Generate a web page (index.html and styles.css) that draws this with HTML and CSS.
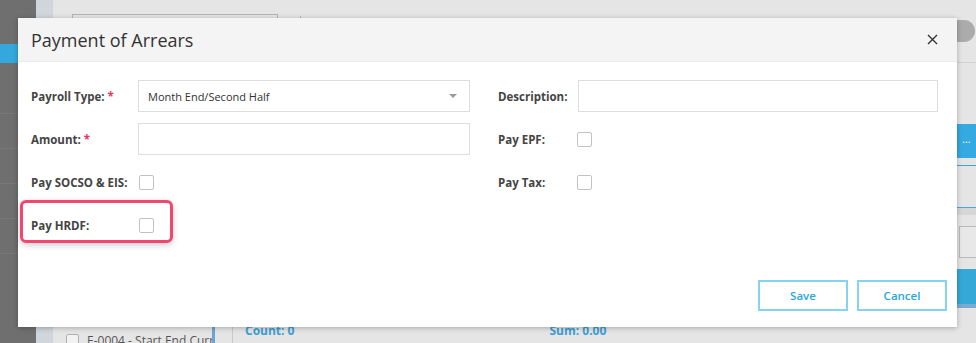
FILE: index.html
```html
<!DOCTYPE html>
<html>
<head>
<meta charset="utf-8">
<link rel="stylesheet" href="styles.css">
</head>
<body>
<div class="app">
  <div class="sidebar">
    <div class="side-item active"></div>
    <div class="side-item"></div>
    <div class="side-item chev"></div>
    <div class="side-item chev"></div>
    <div class="side-item"></div>
    <div class="side-item"></div>
  </div>
  <div class="rail"></div>
  <div class="main">
    <div class="content">
      <div class="topbar">
        <div class="top-input"></div>
        <div class="top-tick"></div>
      </div>
      <div class="bottom">
        <div class="list-panel">
          <div class="list-row"><span class="bg-check"></span><span>E-0004 - Start End Current</span></div>
          <div class="scroll-bar"></div>
        </div>
        <div class="totals">
          <span class="total count">Count: 0</span>
          <span class="total sum">Sum: 0.00</span>
        </div>
      </div>
    </div>
    <div class="right-col">
      <div class="pill"></div>
      <div class="r-line"></div>
      <div class="r-blue"><span>...</span></div>
      <div class="r-blue-line"></div>
      <div class="r-band"></div>
      <div class="r-input"></div>
      <div class="r-blue2"></div>
    </div>
  </div>
</div>

<div class="modal">
  <div class="modal-header">
    <h1 class="modal-title">Payment of Arrears</h1>
    <button class="close" aria-label="Close">
      <svg width="11" height="11" viewBox="0 0 11 11"><path d="M1 1L10 10M10 1L1 10" stroke="#333" stroke-width="1.4" fill="none"/></svg>
    </button>
  </div>
  <div class="modal-body">
    <div class="form">
      <div class="col left">
        <div class="row">
          <label class="label">Payroll Type: <span class="req">*</span></label>
          <div class="field select"><span>Month End/Second Half</span><i class="caret"></i></div>
        </div>
        <div class="row">
          <label class="label">Amount: <span class="req">*</span></label>
          <div class="field"></div>
        </div>
        <div class="row">
          <label class="label">Pay SOCSO &amp; EIS:</label>
          <span class="check"></span>
        </div>
        <div class="row">
          <label class="label">Pay HRDF:</label>
          <span class="check"></span>
        </div>
      </div>
      <div class="col right">
        <div class="row">
          <label class="label">Description:</label>
          <div class="field"></div>
        </div>
        <div class="row">
          <label class="label">Pay EPF:</label>
          <span class="check"></span>
        </div>
        <div class="row">
          <label class="label">Pay Tax:</label>
          <span class="check"></span>
        </div>
      </div>
    </div>
    <div class="actions">
      <button class="btn">Save</button>
      <button class="btn">Cancel</button>
    </div>
  </div>
  <div class="highlight"></div>
</div>
</body>
</html>
```

FILE: styles.css
```css
* { box-sizing: border-box; }
html, body { margin: 0; padding: 0; }
body {
  width: 976px;
  height: 343px;
  overflow: hidden;
  font-family: "Open Sans", "Liberation Sans", sans-serif;
  background: #e5e5e5;
  position: relative;
}

/* ---------- dimmed background app ---------- */
.app {
  display: flex;
  width: 976px;
  height: 343px;
}
.sidebar {
  width: 36px;
  background: #6f6f6f;
  padding-top: 44px;
  display: flex;
  flex-direction: column;
}
.side-item {
  height: 35px;
  border-bottom: 1px solid #777;
}
.side-item.active {
  height: 19px;
  background: #34a8dc;
  border-bottom: none;
  margin-bottom: 16px;
}
.rail {
  width: 17px;
  background: #d0d6dc;
}
.main {
  flex: 1;
  display: flex;
  background: #e5e5e5;
}
.content {
  flex: 1;
  display: flex;
  flex-direction: column;
  justify-content: space-between;
}
.topbar {
  display: flex;
  align-items: flex-start;
  padding-top: 14px;
  padding-left: 19px;
  height: 20px;
}
.top-input {
  width: 206px;
  height: 10px;
  border: 1px solid #b4b4b4;
}
.top-tick {
  width: 1px;
  height: 4px;
  background: #b4b4b4;
  margin-left: 22px;
  margin-top: 2px;
}
.bottom {
  display: flex;
  height: 53px;
}
.list-panel {
  width: 180px;
  display: flex;
  align-items: flex-end;
  justify-content: space-between;
  border-right: 1px solid #c9c9c9;
  padding-left: 13px;
}
.list-row {
  display: flex;
  align-items: center;
  gap: 8px;
  font-size: 12px;
  color: #555;
  white-space: nowrap;
  overflow: hidden;
  width: 146px;
  margin-bottom: -6px;
}
.bg-check {
  width: 13px;
  height: 13px;
  border: 1px solid #b0b0b0;
  border-radius: 2px;
  background: #f2f2f2;
  flex: none;
}
.scroll-bar {
  width: 3px;
  height: 53px;
  background: #6aa5d6;
  margin-right: 17px;
}
.totals {
  flex: 1;
  display: flex;
  padding-left: 12px;
  padding-top: 32px;
}
.total {
  font-weight: 700;
  font-size: 12px;
  color: #3c9ed4;
}
.total.sum { margin-left: 255px; }

.right-col {
  width: 30px;
  display: flex;
  flex-direction: column;
  padding-top: 20px;
}
.pill {
  height: 22px;
  width: 19px;
  border-radius: 0 11px 11px 0;
  background: #ababab;
  align-self: flex-end;
  margin-right: 1px;
}
.r-line {
  height: 1px;
  background: #d2d2d2;
  margin-top: 20px;
}
.r-blue {
  height: 34px;
  margin-top: 61px;
  background: #35a9e1;
  color: #fff;
  font-size: 11px;
  line-height: 30px;
  padding-left: 16px;
}
.r-blue-line {
  height: 1px;
  background: #3aa7df;
  margin-top: 7px;
}
.r-band {
  height: 8px;
  margin-top: 41px;
  background: #d6d6d6;
  border-top: 1px solid #4aa9dc;
}
.r-input {
  height: 32px;
  margin-top: 11px;
  margin-left: 13px;
  border: 1px solid #b9b9b9;
  border-right: none;
  background: #e8e8e8;
}
.r-blue2 {
  height: 39px;
  margin-top: 11px;
  background: #35a8d7;
  border-bottom: 4px solid #7aaad0;
  border-left: 2px solid #2b8fbd;
}

/* ---------- modal ---------- */
.modal {
  position: absolute;
  left: 18px;
  top: 18px;
  width: 939px;
  height: 309px;
  background: #fff;
  box-shadow: 0 1px 5px rgba(0,0,0,0.28);
  display: flex;
  flex-direction: column;
}
.modal-header {
  height: 44px;
  background: #f4f4f4;
  border-bottom: 1px solid #ebebeb;
  display: flex;
  align-items: center;
  justify-content: space-between;
  padding: 0 19px 0 13px;
}
.modal-title {
  margin: 0;
  font-size: 18px;
  font-weight: 400;
  color: #333;
}
.close {
  border: none;
  background: transparent;
  padding: 0;
  width: 11px;
  height: 11px;
  display: flex;
  cursor: pointer;
}
.modal-body {
  flex: 1;
  display: flex;
  flex-direction: column;
  justify-content: space-between;
  padding: 18px 10px 16px 13px;
}
.form {
  display: flex;
  gap: 28px;
}
.col {
  display: flex;
  flex-direction: column;
  gap: 11px;
}
.col.left { width: 439px; }
.col.right { width: 440px; }
.row {
  height: 32px;
  display: flex;
  align-items: center;
}
.label {
  font-size: 11.5px;
  font-weight: 700;
  color: #444;
  flex: none;
}
.left .label { width: 107px; }
.right .label { width: 80px; }
.req { color: #e8335f; }
.field {
  flex: 1;
  height: 32px;
  border: 1px solid #dedede;
  background: #fff;
}
.select {
  display: flex;
  align-items: center;
  justify-content: space-between;
  padding: 0 12px 0 9px;
  font-size: 11px;
  color: #333;
}
.caret {
  width: 0;
  height: 0;
  border-left: 4px solid transparent;
  border-right: 4px solid transparent;
  border-top: 4px solid #9a9a9a;
}
.check {
  width: 15px;
  height: 15px;
  border: 1px solid #c2c2c2;
  border-radius: 2px;
  margin-left: 1px;
  background: #fff;
}
.right .check { margin-left: -1px; }
.actions {
  display: flex;
  justify-content: flex-end;
  gap: 9px;
}
.btn {
  width: 90px;
  height: 31px;
  border: 2px solid #84d3f4;
  background: #fff;
  color: #2aa6de;
  font-family: "Open Sans", "Liberation Sans", sans-serif;
  font-size: 11.5px;
  font-weight: 600;
  cursor: pointer;
}
.highlight {
  position: absolute;
  left: 2px;
  top: 182px;
  width: 153px;
  height: 43px;
  border: 3px solid #f2456f;
  border-radius: 6px;
  box-shadow: 0 2px 6px rgba(0,0,0,0.2);
  pointer-events: none;
}
```
